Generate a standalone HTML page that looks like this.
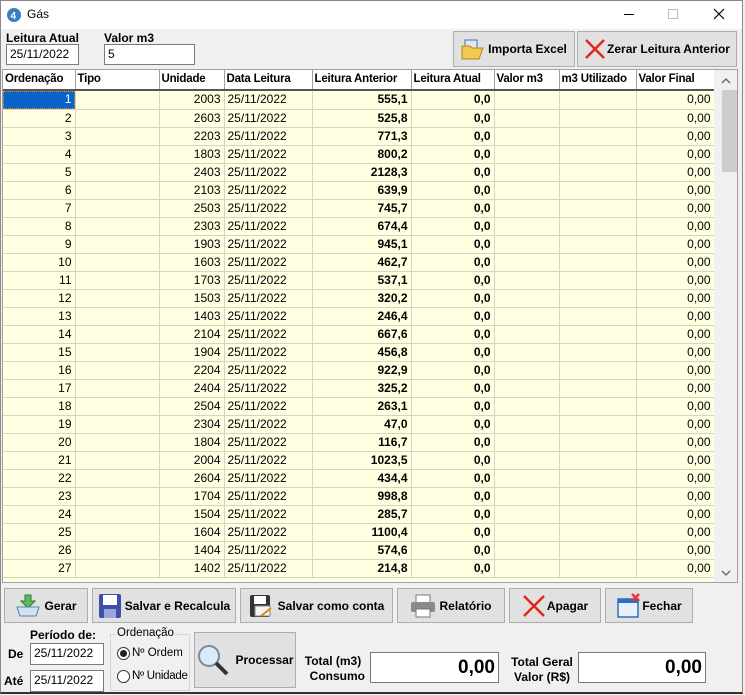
<!DOCTYPE html><html><head><style>
*{box-sizing:border-box;margin:0;padding:0}
body{width:745px;height:695px;overflow:hidden;background:#f0f0f0;font-family:"Liberation Sans",Tahoma,sans-serif;font-size:12px;color:#000;position:relative}
.a{position:absolute}
.win{left:0;top:0;width:743px;height:694px;border:1px solid #888;border-bottom:2px solid #333;background:#f0f0f0}
.title{left:1px;top:1px;width:741px;height:28px;background:#fff}
.b{font-weight:bold}
.inp{background:#fff;border:1px solid #7a7a7a;padding:2px 3px;font-size:12px}
.btn{background:#e1e1e1;border:1px solid #adadad;font-weight:bold;display:flex;align-items:center;justify-content:center;gap:3px}
table{border-collapse:collapse;table-layout:fixed}
td{height:18px;border-right:1px solid #d6d6c0;border-bottom:1px solid #d6d6c0;padding:0 3px;white-space:nowrap;overflow:hidden;font-size:12px;line-height:17px}
th{height:20px;background:#fff;border-right:1px solid #a0a0a0;border-bottom:2px solid #555;font-weight:bold;text-align:left;padding:0 2px;font-size:11.5px;white-space:nowrap;overflow:hidden;letter-spacing:-0.2px;line-height:17px}
tr.r td{background:#ffffe1}
.rt{text-align:right}
</style></head><body>
<div class="a win"></div>
<div class="a title"></div>
<svg class="a" style="left:6px;top:7px" width="16" height="16"><circle cx="8" cy="8" r="7" fill="#3a7fc2"/><text x="4.5" y="12" font-size="10" fill="#fff" font-family="Liberation Sans" font-weight="bold">4</text></svg>
<div class="a" style="left:27px;top:7px;font-size:12px">Gás</div>
<div class="a" style="left:624px;top:14px;width:10px;height:1px;background:#000"></div>
<div class="a" style="left:668px;top:9px;width:10px;height:10px;border:1px solid #bbb"></div>
<svg class="a" style="left:713px;top:8px" width="12" height="12"><path d="M1 1l10 10M11 1L1 11" stroke="#000" stroke-width="1.2"/></svg>

<div class="a b" style="left:6px;top:31px">Leitura Atual</div>
<div class="a inp" style="left:6px;top:44px;width:73px;height:21px">25/11/2022</div>
<div class="a b" style="left:104px;top:31px">Valor m3</div>
<div class="a inp" style="left:104px;top:44px;width:91px;height:21px">5</div>
<div class="a btn" style="left:453px;top:31px;width:122px;height:36px"><svg width="24" height="22"><rect x="4" y="2" width="12" height="10" fill="#dfe8f5" stroke="#4a6fa5"/><path d="M1 8h8l2 2h11l-4 11H1z" fill="#f2c94c" stroke="#b08820"/></svg>Importa Excel</div>
<div class="a btn" style="left:577px;top:31px;width:160px;height:36px;gap:1px"><svg width="22" height="22"><path d="M2 2l18 18M20 2L2 20" stroke="#e5261b" stroke-width="2.5"/></svg>Zerar Leitura Anterior</div>

<div class="a" style="left:2px;top:69px;width:736px;height:514px;border:1px solid #a0a0a0;background:#ffffe1;overflow:hidden">
<table style="width:711px">
<colgroup><col style="width:72px"><col style="width:84px"><col style="width:65px"><col style="width:88px"><col style="width:99px"><col style="width:83px"><col style="width:65px"><col style="width:77px"><col style="width:78px"></colgroup>
<tr><th>Ordenação</th><th>Tipo</th><th>Unidade</th><th>Data Leitura</th><th>Leitura Anterior</th><th>Leitura Atual</th><th>Valor m3</th><th>m3 Utilizado</th><th>Valor Final</th></tr>
</table>
<table style="width:711px" id="t">
<colgroup><col style="width:72px"><col style="width:84px"><col style="width:65px"><col style="width:88px"><col style="width:99px"><col style="width:83px"><col style="width:65px"><col style="width:77px"><col style="width:78px"></colgroup>
<tbody>
<tr class="r"><td class="rt" style="background:#0a63c8;color:#fff;outline:1px dotted #f80;outline-offset:-1px">1</td><td></td><td class="rt">2003</td><td>25/11/2022</td><td class="rt b">555,1</td><td class="rt b">0,0</td><td></td><td></td><td class="rt">0,00</td></tr>
<tr class="r"><td class="rt">2</td><td></td><td class="rt">2603</td><td>25/11/2022</td><td class="rt b">525,8</td><td class="rt b">0,0</td><td></td><td></td><td class="rt">0,00</td></tr>
<tr class="r"><td class="rt">3</td><td></td><td class="rt">2203</td><td>25/11/2022</td><td class="rt b">771,3</td><td class="rt b">0,0</td><td></td><td></td><td class="rt">0,00</td></tr>
<tr class="r"><td class="rt">4</td><td></td><td class="rt">1803</td><td>25/11/2022</td><td class="rt b">800,2</td><td class="rt b">0,0</td><td></td><td></td><td class="rt">0,00</td></tr>
<tr class="r"><td class="rt">5</td><td></td><td class="rt">2403</td><td>25/11/2022</td><td class="rt b">2128,3</td><td class="rt b">0,0</td><td></td><td></td><td class="rt">0,00</td></tr>
<tr class="r"><td class="rt">6</td><td></td><td class="rt">2103</td><td>25/11/2022</td><td class="rt b">639,9</td><td class="rt b">0,0</td><td></td><td></td><td class="rt">0,00</td></tr>
<tr class="r"><td class="rt">7</td><td></td><td class="rt">2503</td><td>25/11/2022</td><td class="rt b">745,7</td><td class="rt b">0,0</td><td></td><td></td><td class="rt">0,00</td></tr>
<tr class="r"><td class="rt">8</td><td></td><td class="rt">2303</td><td>25/11/2022</td><td class="rt b">674,4</td><td class="rt b">0,0</td><td></td><td></td><td class="rt">0,00</td></tr>
<tr class="r"><td class="rt">9</td><td></td><td class="rt">1903</td><td>25/11/2022</td><td class="rt b">945,1</td><td class="rt b">0,0</td><td></td><td></td><td class="rt">0,00</td></tr>
<tr class="r"><td class="rt">10</td><td></td><td class="rt">1603</td><td>25/11/2022</td><td class="rt b">462,7</td><td class="rt b">0,0</td><td></td><td></td><td class="rt">0,00</td></tr>
<tr class="r"><td class="rt">11</td><td></td><td class="rt">1703</td><td>25/11/2022</td><td class="rt b">537,1</td><td class="rt b">0,0</td><td></td><td></td><td class="rt">0,00</td></tr>
<tr class="r"><td class="rt">12</td><td></td><td class="rt">1503</td><td>25/11/2022</td><td class="rt b">320,2</td><td class="rt b">0,0</td><td></td><td></td><td class="rt">0,00</td></tr>
<tr class="r"><td class="rt">13</td><td></td><td class="rt">1403</td><td>25/11/2022</td><td class="rt b">246,4</td><td class="rt b">0,0</td><td></td><td></td><td class="rt">0,00</td></tr>
<tr class="r"><td class="rt">14</td><td></td><td class="rt">2104</td><td>25/11/2022</td><td class="rt b">667,6</td><td class="rt b">0,0</td><td></td><td></td><td class="rt">0,00</td></tr>
<tr class="r"><td class="rt">15</td><td></td><td class="rt">1904</td><td>25/11/2022</td><td class="rt b">456,8</td><td class="rt b">0,0</td><td></td><td></td><td class="rt">0,00</td></tr>
<tr class="r"><td class="rt">16</td><td></td><td class="rt">2204</td><td>25/11/2022</td><td class="rt b">922,9</td><td class="rt b">0,0</td><td></td><td></td><td class="rt">0,00</td></tr>
<tr class="r"><td class="rt">17</td><td></td><td class="rt">2404</td><td>25/11/2022</td><td class="rt b">325,2</td><td class="rt b">0,0</td><td></td><td></td><td class="rt">0,00</td></tr>
<tr class="r"><td class="rt">18</td><td></td><td class="rt">2504</td><td>25/11/2022</td><td class="rt b">263,1</td><td class="rt b">0,0</td><td></td><td></td><td class="rt">0,00</td></tr>
<tr class="r"><td class="rt">19</td><td></td><td class="rt">2304</td><td>25/11/2022</td><td class="rt b">47,0</td><td class="rt b">0,0</td><td></td><td></td><td class="rt">0,00</td></tr>
<tr class="r"><td class="rt">20</td><td></td><td class="rt">1804</td><td>25/11/2022</td><td class="rt b">116,7</td><td class="rt b">0,0</td><td></td><td></td><td class="rt">0,00</td></tr>
<tr class="r"><td class="rt">21</td><td></td><td class="rt">2004</td><td>25/11/2022</td><td class="rt b">1023,5</td><td class="rt b">0,0</td><td></td><td></td><td class="rt">0,00</td></tr>
<tr class="r"><td class="rt">22</td><td></td><td class="rt">2604</td><td>25/11/2022</td><td class="rt b">434,4</td><td class="rt b">0,0</td><td></td><td></td><td class="rt">0,00</td></tr>
<tr class="r"><td class="rt">23</td><td></td><td class="rt">1704</td><td>25/11/2022</td><td class="rt b">998,8</td><td class="rt b">0,0</td><td></td><td></td><td class="rt">0,00</td></tr>
<tr class="r"><td class="rt">24</td><td></td><td class="rt">1504</td><td>25/11/2022</td><td class="rt b">285,7</td><td class="rt b">0,0</td><td></td><td></td><td class="rt">0,00</td></tr>
<tr class="r"><td class="rt">25</td><td></td><td class="rt">1604</td><td>25/11/2022</td><td class="rt b">1100,4</td><td class="rt b">0,0</td><td></td><td></td><td class="rt">0,00</td></tr>
<tr class="r"><td class="rt">26</td><td></td><td class="rt">1404</td><td>25/11/2022</td><td class="rt b">574,6</td><td class="rt b">0,0</td><td></td><td></td><td class="rt">0,00</td></tr>
<tr class="r"><td class="rt">27</td><td></td><td class="rt">1402</td><td>25/11/2022</td><td class="rt b">214,8</td><td class="rt b">0,0</td><td></td><td></td><td class="rt">0,00</td></tr>
</tbody></table>
<div class="a" style="left:711px;top:0;width:24px;height:512px;background:#f0f0f0"></div>
<svg class="a" style="left:718px;top:8px" width="10" height="6"><path d="M1 5l4-4 4 4" stroke="#606060" fill="none" stroke-width="1.3"/></svg>
<div class="a" style="left:719px;top:20px;width:15px;height:82px;background:#cdcdcd"></div>
<svg class="a" style="left:718px;top:500px" width="10" height="6"><path d="M1 1l4 4 4-4" stroke="#606060" fill="none" stroke-width="1.3"/></svg>
</div>

<div class="a btn" style="left:4px;top:588px;width:84px;height:35px"><svg width="26" height="24"><path d="M10 1h6v6h4l-7 7-7-7h4z" fill="#5cb85c" stroke="#2e7d32"/><path d="M2 13h22l-3 9H5z" fill="#cfe3f5" stroke="#5a7fa6"/></svg>Gerar</div>
<div class="a btn" style="left:92px;top:588px;width:144px;height:35px"><svg width="24" height="26"><rect x="1" y="1" width="22" height="24" rx="2" fill="#3e4fa8"/><rect x="5" y="2" width="14" height="10" fill="#fff"/><rect x="6" y="16" width="12" height="9" fill="#9aa4d8"/></svg>Salvar e Recalcula</div>
<div class="a btn" style="left:240px;top:588px;width:153px;height:35px"><svg width="26" height="24"><rect x="1" y="1" width="20" height="22" rx="2" fill="#333"/><rect x="5" y="2" width="12" height="8" fill="#fff"/><rect x="6" y="12" width="15" height="10" fill="#f4f4f4" stroke="#888"/><path d="M12 22l10-8" stroke="#e08a00" stroke-width="2"/></svg>Salvar como conta</div>
<div class="a btn" style="left:397px;top:588px;width:108px;height:35px"><svg width="26" height="24"><rect x="6" y="1" width="14" height="8" fill="#fff" stroke="#777"/><rect x="1" y="8" width="24" height="10" rx="2" fill="#8a8a8a"/><rect x="6" y="15" width="14" height="8" fill="#fff" stroke="#777"/></svg>Relatório</div>
<div class="a btn" style="left:509px;top:588px;width:92px;height:35px;gap:1px"><svg width="24" height="24"><path d="M2 2l20 20M22 2L2 22" stroke="#e5261b" stroke-width="2.5"/></svg>Apagar</div>
<div class="a btn" style="left:605px;top:588px;width:88px;height:35px;gap:0"><svg width="26" height="26"><rect x="2" y="6" width="20" height="18" fill="#e8f1fb" stroke="#2a6fc0" stroke-width="1.5"/><rect x="2" y="6" width="20" height="4" fill="#2a6fc0"/><path d="M16 1l7 7M23 1l-7 7" stroke="#e33" stroke-width="2.5"/></svg>Fechar</div>

<div class="a b" style="left:30px;top:628px;font-size:12px">Período de:</div>
<div class="a b" style="left:8px;top:647px">De</div>
<div class="a inp" style="left:30px;top:643px;width:74px;height:22px">25/11/2022</div>
<div class="a b" style="left:4px;top:674px">Até</div>
<div class="a inp" style="left:30px;top:670px;width:74px;height:22px">25/11/2022</div>
<div class="a" style="left:110px;top:634px;width:80px;height:57px;border:1px solid #d5d5d5"></div>
<div class="a" style="left:115px;top:627px;background:#f0f0f0;padding:0 2px;font-size:11.5px">Ordenação</div>
<div class="a" style="left:117px;top:647px;width:13px;height:13px;border:1px solid #333;border-radius:50%;background:#fff"></div>
<div class="a" style="left:120px;top:650px;width:7px;height:7px;border-radius:50%;background:#222"></div>
<div class="a" style="left:132px;top:647px;font-size:11.5px">Nº Ordem</div>
<div class="a" style="left:117px;top:670px;width:13px;height:13px;border:1px solid #333;border-radius:50%;background:#fff"></div>
<div class="a" style="left:132px;top:670px;font-size:11.5px;letter-spacing:-0.3px">Nº Unidade</div>
<div class="a btn" style="left:194px;top:632px;width:102px;height:56px;gap:5px"><svg width="34" height="34"><circle cx="13" cy="13" r="10" fill="#dbeafb" stroke="#7a8a9a" stroke-width="2"/><path d="M20 20l11 11" stroke="#333" stroke-width="4"/></svg>Processar</div>
<div class="a b" style="left:303px;top:654px;text-align:center;width:60px;line-height:15px">Total (m3)<br>&nbsp;&nbsp;Consumo</div>
<div class="a inp b" style="left:370px;top:652px;width:129px;height:31px;font-size:19px;text-align:right;padding-top:4px">0,00</div>
<div class="a b" style="left:510px;top:655px;text-align:center;width:64px;line-height:15px">Total Geral<br>Valor (R$)</div>
<div class="a inp b" style="left:578px;top:652px;width:128px;height:31px;font-size:19px;text-align:right;padding-top:4px">0,00</div>
</body></html>
